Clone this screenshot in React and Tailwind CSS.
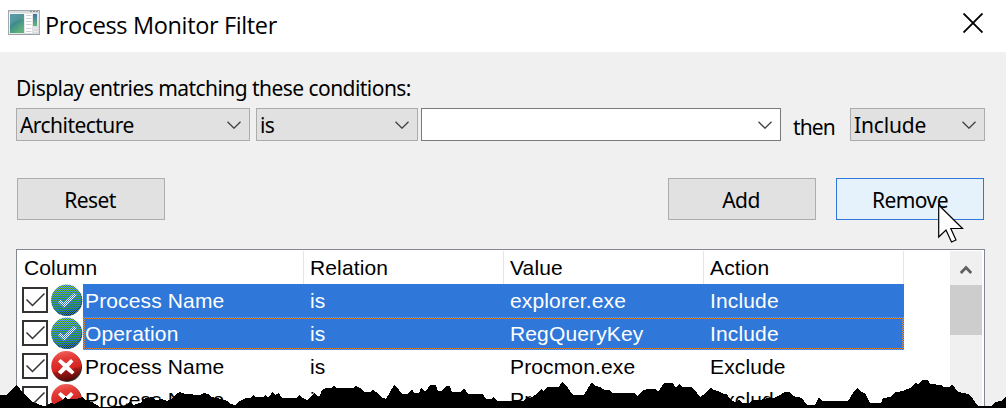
import React from "react";

const TAHOMA = "font-['Noto_Sans','Liberation_Sans',sans-serif]";

const rows = [
  { column: "Process Name", relation: "is", value: "explorer.exe", action: "Include", selected: true },
  { column: "Operation", relation: "is", value: "RegQueryKey", action: "Include", selected: true, focused: true },
  { column: "Process Name", relation: "is", value: "Procmon.exe", action: "Exclude" },
  { column: "Process Name", relation: "is", value: "Procexp.exe", action: "Exclude" },
];

function AppIcon() {
  return (
    <svg width="32" height="26" viewBox="0 0 32 26" className="shrink-0">
      <defs>
        <linearGradient id="pane" x1="0" y1="0" x2="0.6" y2="1">
          <stop offset="0" stopColor="#4a8fa6" />
          <stop offset="0.5" stopColor="#3d8a8c" />
          <stop offset="1" stopColor="#62b27c" />
        </linearGradient>
        <linearGradient id="side" x1="0" y1="0" x2="0" y2="1">
          <stop offset="0" stopColor="#3c74a8" />
          <stop offset="1" stopColor="#63b878" />
        </linearGradient>
        <linearGradient id="frame" x1="0" y1="0" x2="1" y2="1">
          <stop offset="0" stopColor="#f7f7f7" />
          <stop offset="1" stopColor="#d9dadc" />
        </linearGradient>
      </defs>
      <rect x="0.5" y="0.5" width="31" height="24" fill="url(#frame)" stroke="#a4a9ad" />
      <path d="M1 2H31" stroke="#c4c8cc" />
      <path d="M22 1.5h2M25 1.5h2M28 1.5h2" stroke="#8b9095" />
      <rect x="2" y="4" width="14" height="19" fill="url(#pane)" />
      <path d="M2 4h14v5C10 9 5 12 2 16z" fill="#fff" opacity="0.1" />
      <rect x="17" y="4" width="7" height="19" fill="#fff" />
      <path d="M18 5.500h5.500M18 8.500h5.500M18 11.500h5.500M18 14.500h5.500M18 18.500h5.500M18 21.500h5.500" stroke="#cfd1d3" />
      <rect x="25" y="4" width="4" height="12" fill="url(#side)" />
      <path d="M25 18.500h5M25 21.500h5" stroke="#e9eaeb" />
      <path d="M1 24.500h31" stroke="#9a9fa3" />
    </svg>
  );
}

function Chevron() {
  return (
    <svg width="14" height="8" viewBox="0 0 14 8" fill="none" className="shrink-0">
      <path d="M0.500 0.800 7 7.200 13.500 0.800" stroke="#404040" strokeWidth="1.300" />
    </svg>
  );
}

function Combo({ label, className }) {
  return (
    <div className={"flex h-[33px] items-center justify-between border pl-[3px] pr-[8px] " + className}>
      <span className="mt-px">{label}</span>
      <Chevron />
    </div>
  );
}

function Checkbox() {
  return (
    <svg width="26" height="26" viewBox="0 0 26 26" fill="none" className="mt-[3px] shrink-0">
      <rect x="1" y="1" width="24" height="24" fill="#fff" stroke="#333" strokeWidth="2" />
      <path d="M4.500 12.500 10.500 18.500 22.500 6.500" stroke="#333" strokeWidth="1.500" />
    </svg>
  );
}

function IncludeIcon() {
  return (
    <svg width="32" height="33" viewBox="0 0 32 33" className="shrink-0">
      <defs>
        <linearGradient id="green" x1="0.400" y1="0" x2="0.600" y2="1">
          <stop offset="0" stopColor="#8fd32a" />
          <stop offset="0.450" stopColor="#3fa62e" />
          <stop offset="0.800" stopColor="#2b8a24" />
          <stop offset="1" stopColor="#0e2a0c" />
        </linearGradient>
        <pattern id="dither" width="2" height="2" patternUnits="userSpaceOnUse">
          <path d="M0 0h1v1H0zM1 1h1v1H1z" fill="#2f78d9" shapeRendering="crispEdges" />
        </pattern>
      </defs>
      <circle cx="16" cy="16.800" r="15.200" fill="#24402a" />
      <circle cx="15.300" cy="15.800" r="15" fill="url(#green)" />
      <path d="M7 18 9.500 15.500 13 18.500 23 9 26 11 13.300 24z" fill="#fff" />
      <circle cx="15.700" cy="16.300" r="15.700" fill="url(#dither)" />
    </svg>
  );
}

function ExcludeIcon() {
  return (
    <svg width="32" height="33" viewBox="0 0 32 33" className="shrink-0">
      <defs>
        <linearGradient id="red" x1="0.400" y1="0" x2="0.600" y2="1">
          <stop offset="0" stopColor="#f0605a" />
          <stop offset="0.250" stopColor="#e43a36" />
          <stop offset="0.600" stopColor="#d42420" />
          <stop offset="0.640" stopColor="#a81a16" />
          <stop offset="1" stopColor="#4e0806" />
        </linearGradient>
      </defs>
      <circle cx="16" cy="17" r="15" fill="#303030" />
      <circle cx="15.200" cy="16" r="15" fill="url(#red)" />
      <path d="M7 11.500 9.500 9 15 13.500 20 9 22.500 11.500 18 16.500 23.500 22 21 24.500 15 19.800 10 24.500 6.800 22 12 16.500z" fill="#fff" />
    </svg>
  );
}

function FocusRing() {
  return (
    <svg width="821" height="33" viewBox="0 0 821 33" fill="none" className="absolute left-0 top-0" shapeRendering="crispEdges">
      <defs>
        <pattern id="focus" width="2" height="2" patternUnits="userSpaceOnUse">
          <path d="M0 0h1v1H0zM1 1h1v1H1z" fill="#e8862a" />
        </pattern>
      </defs>
      <path d="M0 0H821V33H0zM2 2V31H819V2z" fill="url(#focus)" fillRule="evenodd" />
    </svg>
  );
}

function Row({ row }) {
  const tone = row.selected ? "bg-[#2f78d9] text-white" : "text-black";
  return (
    <div className="flex h-[33px] items-start pl-[5px]">
      <Checkbox />
      <div className="ml-[3px] flex w-[32px]">{row.selected ? <IncludeIcon /> : <ExcludeIcon />}</div>
      <div className={"relative flex h-[33px] w-[821px] items-start leading-[33px] " + tone}>
        <span className="w-[227px] pl-[2px]">{row.column}</span>
        <span className="w-[200px]">{row.relation}</span>
        <span className="w-[200px]">{row.value}</span>
        <span>{row.action}</span>
        {row.focused && <FocusRing />}
      </div>
    </div>
  );
}

function TornEdge() {
  return (
    <svg width="1006" height="32" viewBox="0 376 1006 32" className="absolute bottom-0 left-0" shapeRendering="crispEdges">
      <path
        fill="#000"
        d="M0 408V395H6L13 388 16 385 19 387 21 391 25 395 33 402 43 406H46L51 403 54 404 62 400 65 397 68 399H77L82 397 85 400 92 402 100 407 125 406 130 402 133 405 142 402 143 399 152 397 156 400 162 399 167 401 172 399 177 393 180 392 185 394 200 395 204 393 208 394 211 397 222 399 227 401 230 404 236 405 238 402 242 400 246 398H250L253 395 255 397H263L265 395 267 397 270 396 272 392 275 395 279 393 282 398H296L299 395 303 398 307 400 310 397 315 393 318 397 320 395 322 390 326 388H331L334 385 336 388H353L356 386 360 388 365 392H370L373 390 379 394 381 397 386 399 390 392 394 385 399 390 402 394H408L412 389 414 393H419L421 388 424 391 427 390 430 385H436L438 391H442L446 386H450L452 392H461L464 388 468 394H483L486 399H491L493 397 498 401H524L527 397 530 398 537 394 541 389 543 391 547 387H559L562 382 568 388 573 395H584L588 388 592 382 595 386 600 387 605 390H609L612 393H634L637 396 644 390 647 389H656L658 392 664 383H673L676 388 679 384 682 387H691L697 393 700 397 705 394 711 387 713 390 718 391 724 394 727 394 730 399 735 402 739 400 742 403H749L752 400 760 400 768 398H774L780 395 785 392H789L793 396 802 398 807 405H815L819 397 822 401H848L853 393 857 388 861 392 865 393 870 403H881L883 398 890 397 896 392 903 391 910 388 913 386 916 382 918 385 922 380H928L930 384 941 385 943 387H950L952 384 955 388 958 392 968 394 973 399 978 406H992L995 402 1001 401 1006 396V408Z"
      />
    </svg>
  );
}

export default function App() {
  return (
    <div className={"relative h-[408px] w-[1006px] overflow-hidden bg-[#f0f0f0] text-black " + TAHOMA}>
      <header className="flex h-[52px] items-center justify-between bg-white pl-2 pr-[23px]">
        <div className="flex items-center gap-[5px]">
          <div className="-mt-[6px]">
            <AppIcon />
          </div>
          <h1 className="-mt-[3px] font-['Open_Sans','Noto_Sans',sans-serif] text-[23.500px] leading-8 tracking-[-0.36px]">
            Process Monitor Filter
          </h1>
        </div>
        <svg width="20" height="20" viewBox="0 0 20 20" className="-mt-[6px]" fill="none">
          <path d="M0.500 0.500 19.500 19.500M19.500 0.500 0.500 19.500" stroke="#000" strokeWidth="1.900" />
        </svg>
      </header>

      <div className="px-4 pt-[22px] text-[21px] leading-[28px] tracking-[-0.55px]">
        <p className="whitespace-nowrap">Display entries matching these conditions:</p>
        <div className="mt-[6px] flex items-center">
          <Combo label="Architecture" className="w-[234px] border-[#acacac] bg-[#e1e1e1]" />
          <Combo label="is" className="ml-[6px] w-[162px] border-[#acacac] bg-[#e1e1e1]" />
          <Combo label="" className="ml-[3px] w-[360px] border-[#7a7a7a] bg-white" />
          <span className="-mb-[5px] ml-[12px] w-[57px] tracking-[-0.9px]">then</span>
          <Combo label="Include" className="w-[135px] border-[#acacac] bg-[#e1e1e1] tracking-[-0.150px]" />
        </div>

        <div className="mt-[37px] flex pl-px pr-[6px]">
          <button className="h-[42px] w-[148px] border border-[#adadad] bg-[#e1e1e1] pr-[2px] pt-px">Reset</button>
          <button className="ml-auto h-[42px] w-[148px] border border-[#adadad] bg-[#e1e1e1] pr-[2px] pt-px">Add</button>
          <button className="relative ml-5 h-[42px] w-[148px] border border-[#2f78d9] bg-[#e5f1fb] pt-px">
            Remove
            <svg width="26" height="40" viewBox="0 0 26 40" className="absolute left-[101px] top-[25px]">
              <path
                d="M0.700 1V33L8 26 13.500 38 18 36 12.800 24.500H24.500Z"
                fill="#fff"
                stroke="#000"
                strokeWidth="1.200"
              />
            </svg>
          </button>
        </div>
      </div>

      <section className="ml-4 mt-[29px] flex h-[180px] w-[969px] justify-between border border-[#828790] bg-white font-['Liberation_Sans',Arial,sans-serif] text-[21px] tracking-[0.140px]">
        <div>
          <div className="flex h-[34px] pt-px leading-[34px]">
            <span className="w-[287px] border-r border-[#e5e5e5] pl-[7px]">Column</span>
            <span className="w-[200px] border-r border-[#e5e5e5] pl-[6px]">Relation</span>
            <span className="w-[200px] border-r border-[#e5e5e5] pl-[6px]">Value</span>
            <span className="w-[200px] border-r border-[#e5e5e5] pl-[6px]">Action</span>
          </div>
          {rows.map((row, i) => (
            <Row key={i} row={row} />
          ))}
        </div>
        <div className="mr-[2px] mt-px flex w-[32px] flex-col bg-[#f0f0f0]">
          <div className="flex h-[34px] items-center justify-center">
            <svg width="12" height="10" viewBox="0 0 12 10" fill="none" className="mt-[3px]">
              <path d="M0.800 8 6 2.500 11.200 8" stroke="#606060" strokeWidth="2.800" />
            </svg>
          </div>
          <div className="h-[50px] bg-[#cdcdcd]" />
        </div>
      </section>
      <TornEdge />
    </div>
  );
}
